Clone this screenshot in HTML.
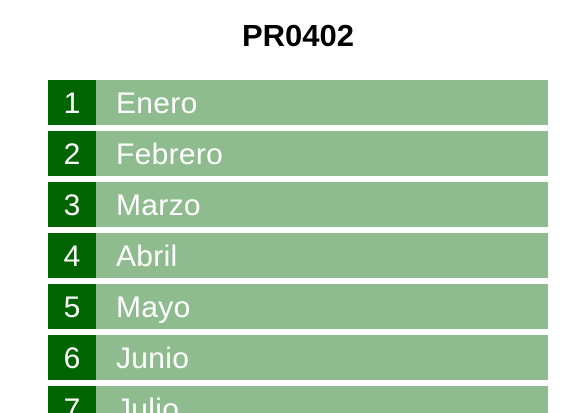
<!DOCTYPE html>
<html><head><style>
html,body{margin:0;padding:0;background:#fff;overflow:hidden;width:579px;height:413px}
body{font-family:"Liberation Sans","DejaVu Sans",sans-serif;position:relative}
h1{position:absolute;left:48px;width:500px;top:15px;margin:0;text-align:center;font-size:31px;font-weight:bold;line-height:42px}
.r{position:absolute;left:48px;width:500px;height:45px;background:#8fbc8f;color:#fff;font-size:30px;line-height:48px}
.n{position:absolute;left:0;top:0;width:48px;height:45px;background:#006400;text-align:center}
.t{position:absolute;left:68px;top:0;letter-spacing:0.3px}
</style></head><body>
<h1>PR0402</h1>
<div class="r" style="top:80px"><div class="n">1</div><div class="t">Enero</div></div>
<div class="r" style="top:131px"><div class="n">2</div><div class="t">Febrero</div></div>
<div class="r" style="top:182px"><div class="n">3</div><div class="t">Marzo</div></div>
<div class="r" style="top:233px"><div class="n">4</div><div class="t">Abril</div></div>
<div class="r" style="top:284px"><div class="n">5</div><div class="t">Mayo</div></div>
<div class="r" style="top:335px"><div class="n">6</div><div class="t">Junio</div></div>
<div class="r" style="top:386px"><div class="n">7</div><div class="t">Julio</div></div>
</body></html>
